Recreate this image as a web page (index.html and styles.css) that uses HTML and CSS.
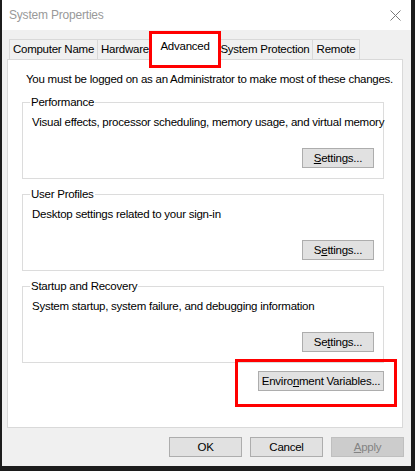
FILE: index.html
```html
<!DOCTYPE html>
<html lang="en">
<head>
<meta charset="utf-8">
<title>System Properties</title>
<link rel="stylesheet" href="styles.css">
</head>
<body>
<div class="window">
  <div class="titlebar">
    <span class="title">System Properties</span>
    <svg class="close" width="11" height="11" viewBox="0 0 11 11">
      <path d="M0.5 0.5 L10.5 10.5 M10.5 0.5 L0.5 10.5" stroke="#7a7a7a" stroke-width="1" fill="none"/>
    </svg>
  </div>
  <div class="content">
    <div class="tabs">
      <div class="tab tab-cn">Computer Name</div>
      <div class="tab tab-hw">Hardware</div>
      <div class="tab tab-adv selected">Advanced<span class="mark mark-tab"></span></div>
      <div class="tab tab-sp">System Protection</div>
      <div class="tab tab-rm">Remote</div>
    </div>
    <div class="panel">
      <p class="notice">You must be logged on as an Administrator to make most of these changes.</p>
      <fieldset class="group">
        <legend>Performance</legend>
        <p class="desc">Visual effects, processor scheduling, memory usage, and virtual memory</p>
        <div class="row"><button class="btn btn-settings"><u>S</u>ettings...</button></div>
      </fieldset>
      <fieldset class="group">
        <legend>User Profiles</legend>
        <p class="desc">Desktop settings related to your sign-in</p>
        <div class="row"><button class="btn btn-settings">S<u>e</u>ttings...</button></div>
      </fieldset>
      <fieldset class="group">
        <legend>Startup and Recovery</legend>
        <p class="desc">System startup, system failure, and debugging information</p>
        <div class="row"><button class="btn btn-settings">Se<u>t</u>tings...</button></div>
      </fieldset>
      <div class="row env-row">
        <button class="btn btn-env">Enviro<u>n</u>ment Variables...<span class="mark mark-env"></span></button>
      </div>
    </div>
    <div class="actions">
      <button class="btn btn-dialog">OK</button>
      <button class="btn btn-dialog">Cancel</button>
      <button class="btn btn-dialog disabled"><u>A</u>pply</button>
    </div>
  </div>
</div>
</body>
</html>
```

FILE: styles.css
```css
* {
  box-sizing: border-box;
}

html, body {
  margin: 0;
  padding: 0;
}

body {
  width: 415px;
  height: 471px;
  overflow: hidden;
  background: #1c1c1c;
  font-family: "Liberation Sans", Arial, sans-serif;
  font-size: 11.5px;
  letter-spacing: -0.25px;
  color: #000;
}

.window {
  margin-left: 2px;
  width: 409px;
  height: 466px;
  background: #f0f0f0;
  display: flex;
  flex-direction: column;
}

/* caption bar */
.titlebar {
  height: 30px;
  flex: none;
  background: #fff;
  display: flex;
  align-items: center;
  justify-content: space-between;
  padding: 0 10px 0 7px;
}

.title {
  color: #999;
  font-size: 12px;
  letter-spacing: -0.2px;
  line-height: 16px;
}

.close {
  display: block;
  margin-top: 1px;
}

.content {
  flex: 1;
  display: flex;
  flex-direction: column;
  padding: 3px 8px 0 5px;
}

/* tab strip */
.tabs {
  display: flex;
  align-items: flex-end;
  height: 27px;
  margin: 0 0 -1px 2px;
  position: relative;
  z-index: 1;
}

.tab {
  height: 21px;
  border: 1px solid #d9d9d9;
  background: #f0f0f0;
  display: flex;
  align-items: center;
  justify-content: center;
  line-height: 16px;
  padding-bottom: 1px;
  white-space: nowrap;
}

.tab + .tab {
  margin-left: -1px;
}

.tab-cn { width: 89px; }
.tab-hw { width: 56px; }
.tab-sp { width: 96px; }
.tab-rm { width: 48px; }

.tab.selected {
  position: relative;
  width: 70px;
  height: 27px;
  margin-left: -3px;
  margin-right: -2px;
  background: #fff;
  border-bottom: none;
  align-items: flex-start;
  padding-top: 4px;
  z-index: 2;
}

/* red highlight frames */
.mark {
  position: absolute;
  border: 3px solid #f00;
  pointer-events: none;
}

.mark-tab {
  left: -2px;
  top: -3px;
  width: 72px;
  height: 37px;
}

.mark-env {
  left: -24px;
  top: -13px;
  width: 162px;
  height: 48px;
}

/* tab page */
.panel {
  height: 369px;
  flex: none;
  background: #fff;
  border: 1px solid #d9d9d9;
  padding: 11px 0 0 14px;
}

.notice {
  margin: 0 0 8px 4px;
  line-height: 16px;
  white-space: nowrap;
}

.group {
  margin: 0 0 8px 0;
  width: 362px;
  border: 1px solid #dcdcdc;
  padding: 5px 9px 10px 9px;
  min-width: 0;
}

.group legend {
  margin-left: -2px;
  padding: 0 1px;
  line-height: 14px;
}

.desc {
  margin: 0 0 18px 0;
  line-height: 16px;
  white-space: nowrap;
}

.row {
  display: flex;
  justify-content: flex-end;
}

.env-row {
  width: 362px;
  margin-top: 7px;
}

/* push buttons */
.btn {
  font-family: inherit;
  font-size: 11.5px;
  letter-spacing: -0.25px;
  color: #000;
  height: 20px;
  padding: 0;
  background: #e1e1e1;
  border: 1px solid #adadad;
  border-radius: 0;
  line-height: 16px;
  white-space: nowrap;
}

.btn-settings {
  width: 72px;
}

.btn-env {
  position: relative;
  width: 126px;
}

.actions {
  display: flex;
  justify-content: flex-end;
  gap: 8px;
  margin: 9px -1px 0 0;
}

.btn-dialog {
  width: 73px;
}

.btn-dialog.disabled {
  background: #cccccc;
  border-color: #bfbfbf;
  color: #838383;
}
```
